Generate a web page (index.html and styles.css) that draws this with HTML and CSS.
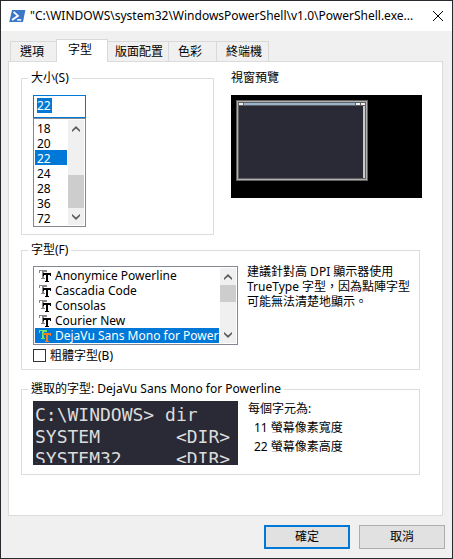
FILE: index.html
```html
<!DOCTYPE html>
<html lang="zh-Hant">
<head>
<meta charset="utf-8">
<title>PowerShell</title>
<link rel="stylesheet" href="styles.css">
</head>
<body>
<svg class="defs" aria-hidden="true">
  <symbol id="tt" viewBox="0 0 12 12">
    <path class="tt-back" d="M0 0h8v2h-3v6h1v1h-4v-1h1v-7h-2v2h-1z"/>
    <path class="tt-front" d="M4 3h8v3h-1v-1h-2v6h1v1h-4v-1h1v-6h-2v1h-1z"/>
  </symbol>
  <symbol id="up" viewBox="0 0 8 6"><path d="M0 4L4 0L8 4V6L4 2.6L0 6z"/></symbol>
  <symbol id="down" viewBox="0 0 8 6"><path d="M0 2L4 6L8 2V0L4 3.4L0 0z"/></symbol>
</svg>
<div class="window">
  <header class="titlebar">
    <svg class="app-icon" viewBox="0 0 17 12" aria-hidden="true">
      <path fill="#3c78c8" d="M3 0h13.4L14 12H0.2z"/>
      <path fill="none" stroke="#fff" stroke-width="1.7" d="M4.6 1.8L9 5.8L3 10"/>
      <path fill="none" stroke="#fff" stroke-width="1.5" d="M8.2 9.9h4"/>
    </svg>
    <h1 class="title">"C:\WINDOWS\system32\WindowsPowerShell\v1.0\PowerShell.exe...</h1>
    <button class="close" type="button" aria-label="關閉">
      <svg viewBox="0 0 10 10"><path d="M0 0L10 10M10 0L0 10"/></svg>
    </button>
  </header>

  <form class="body">
    <nav class="tabs" role="tablist">
      <button type="button" role="tab" class="tab">選項</button>
      <button type="button" role="tab" class="tab active" aria-selected="true">字型</button>
      <button type="button" role="tab" class="tab">版面配置</button>
      <button type="button" role="tab" class="tab">色彩</button>
      <button type="button" role="tab" class="tab">終端機</button>
    </nav>

    <main class="panel">
      <div class="top-row">
        <fieldset class="group size-group">
          <legend>大小(S)</legend>
          <div class="size-box">
            <div class="size-edit"><input type="text" value="22" size="2" aria-label="大小"></div>
            <div class="listbox">
              <select class="sizes" size="7" aria-label="字型大小">
                <option>18</option>
                <option>20</option>
                <option selected>22</option>
                <option>24</option>
                <option>28</option>
                <option>36</option>
                <option>72</option>
              </select>
              <div class="scrollbar">
                <svg class="arrow"><use href="#up"/></svg>
                <span class="thumb thumb-size"></span>
                <svg class="arrow"><use href="#down"/></svg>
              </div>
            </div>
          </div>
        </fieldset>
        <section>
          <h2 class="label">視窗預覽</h2>
          <div class="screen">
            <div class="mini">
              <div class="mini-bar"><i></i><b></b><i></i><i></i></div>
              <div class="mini-body"></div>
            </div>
          </div>
        </section>
      </div>

      <fieldset class="group font-group">
        <legend>字型(F)</legend>
        <div class="columns">
          <div class="left">
            <div class="listbox">
              <div class="fonts" role="radiogroup" aria-label="字型">
                <label><input type="radio" name="font"><svg><use href="#tt"/></svg><span>Anonymice Powerline</span></label>
                <label><input type="radio" name="font"><svg><use href="#tt"/></svg><span>Cascadia Code</span></label>
                <label><input type="radio" name="font"><svg><use href="#tt"/></svg><span>Consolas</span></label>
                <label><input type="radio" name="font"><svg><use href="#tt"/></svg><span>Courier New</span></label>
                <label class="chosen"><input type="radio" name="font" checked><svg><use href="#tt"/></svg><span>DejaVu Sans Mono for Powerline</span></label>
              </div>
              <div class="scrollbar">
                <svg class="arrow"><use href="#up"/></svg>
                <span class="thumb thumb-font"></span>
                <svg class="arrow"><use href="#down"/></svg>
              </div>
            </div>
            <label class="check"><input type="checkbox">粗體字型(B)</label>
          </div>
          <p class="hint">建議針對高 DPI 顯示器使用 TrueType 字型，因為點陣字型可能無法清楚地顯示。</p>
        </div>
      </fieldset>

      <fieldset class="group sample-group">
        <legend>選取的字型: DejaVu Sans Mono for Powerline</legend>
        <div class="columns">
          <pre class="sample">C:\WINDOWS&gt; dir
SYSTEM       &lt;DIR&gt;
SYSTEM32     &lt;DIR&gt;</pre>
          <div class="metrics">
            <p>每個字元為:</p>
            <p class="metric">11 螢幕像素寬度</p>
            <p class="metric">22 螢幕像素高度</p>
          </div>
        </div>
      </fieldset>
    </main>

    <footer class="actions">
      <button type="submit" class="button primary">確定</button>
      <button type="button" class="button">取消</button>
    </footer>
  </form>
</div>
</body>
</html>
```
FILE: styles.css
```css
* { box-sizing: border-box; }
body, h1, h2, p, pre, fieldset { margin: 0; }
body, button, input, select {
  font: 12px/16px "Noto Sans", "Noto Sans CJK TC", sans-serif;
  color: #000;
}
.defs { position: absolute; width: 0; height: 0; }

.window {
  min-height: 100vh;
  display: flex;
  flex-direction: column;
  border: 1px solid #2a292f;
  background: #f0f0f0;
}
.titlebar {
  display: flex;
  align-items: center;
  height: 30px;
  padding: 0 9px 0 8px;
  background: #fff;
}
.app-icon { width: 17px; height: 12px; flex: none; }
.title {
  flex: 1;
  min-width: 0;
  margin-left: 4px;
  overflow: hidden;
  font-size: 12px;
  font-weight: 400;
  white-space: nowrap;
}
.label { font-size: 12px; font-weight: 400; line-height: 16px; }
.close {
  display: flex;
  padding: 0;
  border: 0;
  background: none;
}
.close svg {
  width: 10px;
  height: 10px;
  overflow: visible;
  stroke: #000;
}

.body { padding: 8px 9px 9px 7px; }
.tabs {
  display: flex;
  align-items: flex-end;
  padding-left: 2px;
}
.tab {
  height: 20px;
  padding: 0 8px 0 9px;
  border: 1px solid #d9d9d9;
  border-width: 1px 1px 0 0;
  background: #f0f0f0;
}
.tab:first-child { border-left-width: 1px; border-right-width: 0; padding-right: 12px; }
.tab:nth-child(3) { padding: 0 5px 0 7px; }
.tab:nth-child(4) { padding-right: 14px; }
.tab:last-child { padding-right: 6px; }
.tab.active {
  position: relative;
  height: 23px;
  margin-bottom: -1px;
  padding: 0 15px 3px 11px;
  border-left-width: 1px;
  background: #fff;
}
.panel {
  padding: 8px 20px 40px 12px;
  border: 1px solid #dcdcdc;
  background: #fff;
}
.top-row {
  display: grid;
  grid-template-columns: minmax(0, 1fr) 191px;
  gap: 17px;
}
.group {
  min-width: 0;
  padding: 0 11px 7px;
  border: 1px solid #dcdcdc;
}
legend {
  margin-left: -5px;
  padding: 0 3px;
}
.size-box { width: 53px; margin-top: 9px; }
.size-edit {
  display: flex;
  height: 23px;
  padding: 2px 3px 4px;
  border: 1px solid #0078d7;
}
.size-edit input {
  width: 15px;
  height: 15px;
  padding: 0;
  border: 0;
  outline: 0;
  background: #0078d7;
  color: #fff;
  line-height: 15px;
}
.listbox {
  display: flex;
  padding: 1px;
  border: 1px solid #828790;
  background: #fff;
}
.sizes {
  flex: 1;
  min-width: 0;
  height: 105px;
  margin-right: 1px;
  padding: 0;
  border: 0;
  border-radius: 0;
  outline: 0;
  overflow: hidden;
}
.sizes option {
  height: 15px;
  min-height: 15px;
  padding: 0 2px;
  line-height: 15px;
}
.sizes option:checked {
  background: linear-gradient(#0078d7, #0078d7);
  color: #fff;
}
.scrollbar {
  display: flex;
  flex-direction: column;
  align-items: center;
  flex: none;
  width: 16px;
  background: #f0f0f0;
}
.arrow {
  width: 8px;
  height: 6px;
  margin: 6px 0 5px;
  fill: #5a5a5a;
}
.thumb { width: 100%; background: #cdcdcd; }
.thumb-size { height: 33px; margin: auto 0 0; }
.thumb-font { height: 17px; margin: 0 0 auto; }

.screen {
  height: 103px;
  margin-top: 9px;
  padding: 5px;
  background: #000;
}
.mini {
  width: 132px;
  height: 81px;
  display: flex;
  flex-direction: column;
  border: 1px solid #616161;
  outline: 1px solid #616161;
  outline-offset: -3px;
  box-shadow: inset 0 0 0 1px #b0b0b0;
  padding: 2px;
}
.mini-bar {
  display: flex;
  gap: 1px;
  height: 3px;
  border-bottom: 1px solid #616161;
  background: #616161;
}
.mini-bar i { width: 4px; background: #f0f0f0; }
.mini-bar b { flex: 1; background: #99b4d1; }
.mini-body {
  flex: 1;
  background: #292a36;
  border-right: 2px solid #c8c8c8;
}

.font-group { margin: 7px 2px 0 0; }
.columns { display: flex; }
.left { flex: none; width: 205px; margin-top: 8px; }
.fonts { flex: 1; min-width: 0; margin-right: 1px; }
.fonts label {
  display: flex;
  align-items: center;
  height: 15px;
  padding-left: 4px;
  overflow: hidden;
  line-height: 15px;
  white-space: nowrap;
}
.fonts input { appearance: none; width: 0; margin: 0; }
.fonts svg { flex: none; width: 12px; height: 12px; margin-right: 4px; }
.tt-back { fill: var(--back, #868686); }
.tt-front { fill: var(--front, #000); }
.fonts .chosen {
  --back: #6ee66e;
  --front: #f58020;
  background: #0078d7;
  color: #fff;
}
.check {
  display: flex;
  align-items: center;
  gap: 4px;
  height: 13px;
  margin-top: 4px;
}
.check input {
  appearance: none;
  width: 13px;
  height: 13px;
  margin: 0;
  border: 1px solid #333;
  background: #fff;
}
.hint {
  flex: 1;
  margin: 6px -8px 0 9px;
  line-height: 15px;
}

.sample-group { margin: 11px 2px 0 0; padding-bottom: 9px; }
.sample {
  flex: none;
  width: 205px;
  height: 64px;
  margin-top: 4px;
  padding: 3px 2px 0;
  border-bottom: 2px solid #292a36;
  overflow: hidden;
  background: #292a36;
  color: #dcdcdc;
  font: 18px/22px "DejaVu Sans Mono", monospace;
}
.metrics { margin: 2px 0 0 10px; line-height: 19px; }
.metric { padding-left: 6px; }

.actions {
  display: flex;
  justify-content: flex-end;
  gap: 9px;
  margin: 9px -2px 0 0;
}
.button {
  width: 86px;
  height: 24px;
  padding: 0;
  border: 1px solid #adadad;
  background: #e1e1e1;
}
.button.primary { border: 2px solid #0078d7; }
```
